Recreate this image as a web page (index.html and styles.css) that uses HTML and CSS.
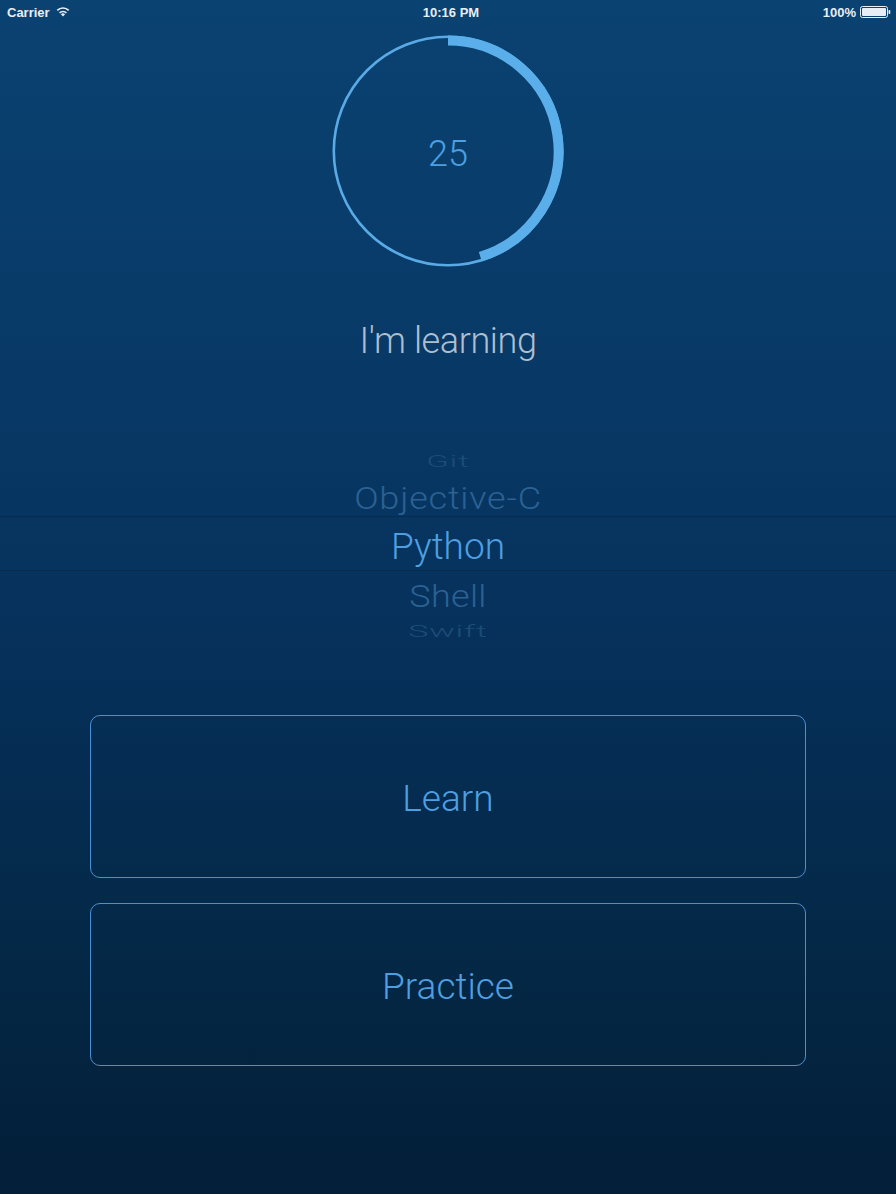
FILE: index.html
```html
<!DOCTYPE html>
<html lang="en">
<head>
<meta charset="utf-8">
<title>Learning</title>
<link rel="stylesheet" href="styles.css">
</head>
<body>
<div class="screen">
  <div class="status-bar">
    <div class="status-left">
      <span>Carrier</span>
      <svg class="wifi" width="14" height="11" viewBox="0 0 14 11">
        <path d="M7 10.6 L4.9 8.2 A3 3 0 0 1 9.1 8.2 Z" fill="#e8eef5"/>
        <path d="M3.6 6.9 A4.8 4.8 0 0 1 10.4 6.9" fill="none" stroke="#e8eef5" stroke-width="1.7"/>
        <path d="M1.3 4.4 A8 8 0 0 1 12.7 4.4" fill="none" stroke="#e8eef5" stroke-width="1.7"/>
      </svg>
    </div>
    <div class="status-center">10:16 PM</div>
    <div class="status-right">
      <span>100%</span>
      <svg class="battery" width="31" height="12" viewBox="0 0 31 12">
        <rect x="0.5" y="0.5" width="27" height="11" rx="2" fill="none" stroke="#e8eef5" stroke-width="1"/>
        <rect x="2" y="2" width="24" height="8" rx="1" fill="#e8eef5"/>
        <rect x="28.5" y="4" width="1.8" height="4" rx="0.8" fill="#e8eef5"/>
      </svg>
    </div>
  </div>

  <div class="progress">
    <svg class="ring" width="232" height="232" viewBox="0 0 232 232">
      <circle cx="116" cy="116" r="114.2" fill="none" stroke="#5aaae6" stroke-width="2.6"/>
      <path d="M116 5.5 A110.5 110.5 0 0 1 148.3 221.7" fill="none" stroke="#5aaee9" stroke-width="10"/>
    </svg>
    <div class="count">25</div>
  </div>

  <div class="heading">I'm learning</div>

  <div class="picker">
    <div class="row row-git"><span>Git</span></div>
    <div class="row row-objc"><span>Objective-C</span></div>
    <div class="row row-selected"><span>Python</span></div>
    <div class="row row-shell"><span>Shell</span></div>
    <div class="row row-swift"><span>Swift</span></div>
  </div>

  <div class="actions">
    <button class="action">Learn</button>
    <button class="action">Practice</button>
  </div>
</div>
</body>
</html>
```

FILE: styles.css
```css
html, body {
  margin: 0;
  padding: 0;
}

body {
  width: 896px;
  height: 1194px;
  overflow: hidden;
  background: linear-gradient(to bottom, #0a4271 0%, #083865 35%, #06305a 55%, #042846 80%, #031e38 100%);
  font-family: "Roboto", "Liberation Sans", sans-serif;
}

.screen {
  display: flex;
  flex-direction: column;
  height: 1194px;
}

.status-bar {
  height: 24px;
  display: grid;
  grid-template-columns: 1fr auto 1fr;
  align-items: center;
  padding: 0 5px 0 7px;
  color: #e8eef5;
  font-family: "Liberation Sans", Arial, sans-serif;
  font-weight: bold;
  font-size: 13px;
}

.status-left {
  display: flex;
  align-items: center;
  gap: 6px;
}

.status-center {
  text-align: center;
  padding-left: 4px;
}

.status-right {
  display: flex;
  align-items: center;
  justify-content: flex-end;
  gap: 4px;
}

.wifi {
  margin-top: -1px;
}

.progress {
  margin-top: 11px;
  align-self: center;
  display: grid;
  width: 232px;
  height: 232px;
}

.ring,
.count {
  grid-area: 1 / 1;
}

.count {
  display: flex;
  align-items: center;
  justify-content: center;
  color: #4c9fe0;
  font-size: 36px;
  font-weight: 300;
  padding-top: 6px;
}

.heading {
  margin-top: 54px;
  height: 40px;
  line-height: 40px;
  text-align: center;
  color: #aebfcf;
  font-size: 36px;
  font-weight: 300;
  letter-spacing: -0.4px;
}

.picker {
  margin-top: 84px;
  display: flex;
  flex-direction: column;
}

.row {
  display: flex;
  justify-content: center;
  align-items: center;
  font-weight: 300;
}

.row-git {
  height: 33px;
  font-size: 33px;
  letter-spacing: 1px;
  color: #1d4c78;
}

.row-git span {
  transform: scaleY(0.5);
}

.row-objc {
  height: 38px;
  font-size: 36px;
  letter-spacing: 0.8px;
  color: #2b6193;
  padding-top: 2px;
  box-sizing: border-box;
}

.row-objc span {
  transform: scaleY(0.88);
}

.row-selected {
  height: 55px;
  box-sizing: border-box;
  border-top: 1px solid #062b4c;
  border-bottom: 1px solid #062b4c;
  padding-top: 6px;
  font-size: 37px;
  color: #4f9fe0;
}

.row-shell {
  height: 44px;
  box-sizing: border-box;
  padding-top: 6px;
  font-size: 36px;
  letter-spacing: 0.3px;
  color: #2b6193;
}

.row-shell span {
  transform: scaleY(0.88);
}

.row-swift {
  height: 26px;
  box-sizing: border-box;
  padding-top: 6px;
  font-size: 34px;
  letter-spacing: 0.8px;
  color: #1d4c78;
}

.row-swift span {
  transform: scaleY(0.5);
}

.actions {
  margin: 74px 90px 0;
  display: flex;
  flex-direction: column;
  gap: 25px;
}

.action {
  height: 163px;
  border: 1px solid #4a90d4;
  border-radius: 10px;
  background: transparent;
  color: #4f9fe0;
  font-family: "Roboto", "Liberation Sans", sans-serif;
  font-size: 37px;
  font-weight: 300;
  padding: 4px 0 0;
}
```
